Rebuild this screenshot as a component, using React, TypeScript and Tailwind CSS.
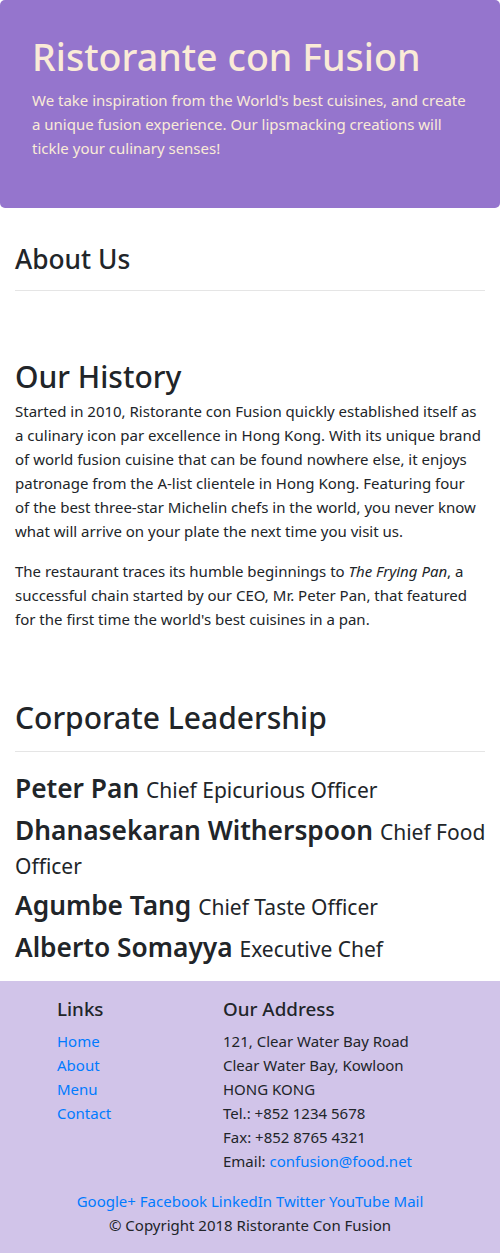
const Lines = ({ lines }: { lines: React.ReactNode[] }) => (
	<>
		{lines.map((l, i) => (
			<span key={i} className="block whitespace-nowrap">
				{l}
			</span>
		))}
	</>
);

export default function App() {
	const leaders: { name: string; title: React.ReactNode }[] = [
		{ name: "Peter Pan", title: "Chief Epicurious Officer" },
		{
			name: "Dhanasekaran Witherspoon",
			title: (
				<>
					Chief Food
					<br />
					Officer
				</>
			),
		},
		{ name: "Agumbe Tang", title: "Chief Taste Officer" },
		{ name: "Alberto Somayya", title: "Executive Chef" },
	];

	return (
		<div className="min-h-screen bg-white text-[#212529] font-['Noto_Sans',sans-serif] text-[15px] leading-6">
			<header className="mb-8 rounded-[5px] bg-[#9575cd] px-8 py-8 text-[#faebd7]">
				<h1 className="mb-2 pt-[1px] text-[37.6px] leading-[47px] font-medium">Ristorante con Fusion</h1>
				<p className="mb-4">
					<Lines
						lines={[
							"We take inspiration from the World's best cuisines, and create",
							"a unique fusion experience. Our lipsmacking creations will",
							"tickle your culinary senses!",
						]}
					/>
				</p>
			</header>

			<main className="px-[15px]">
				<h3 className="pt-[3px] text-[26.3px] leading-[33.6px] font-medium">About Us</h3>
				<hr className="mt-[13px] border-[#e5e5e5]" />

				<h2 className="mt-16 mb-[3px] pt-[3px] text-[30px] leading-[38.4px] font-medium">Our History</h2>
				<p className="mb-4">
					<Lines
						lines={[
							"Started in 2010, Ristorante con Fusion quickly established itself as",
							"a culinary icon par excellence in Hong Kong. With its unique brand",
							"of world fusion cuisine that can be found nowhere else, it enjoys",
							"patronage from the A-list clientele in Hong Kong. Featuring four",
							"of the best three-star Michelin chefs in the world, you never know",
							"what will arrive on your plate the next time you visit us.",
						]}
					/>
				</p>
				<p>
					<Lines
						lines={[
							<>
								The restaurant traces its humble beginnings to <em>The Frying Pan</em>, a
							</>,
							"successful chain started by our CEO, Mr. Peter Pan, that featured",
							"for the first time the world's best cuisines in a pan.",
						]}
					/>
				</p>

				<h2 className="mt-[65px] pt-[3px] text-[30px] leading-[38.4px] font-medium">Corporate Leadership</h2>
				<hr className="mt-[14px] border-[#e5e5e5]" />
				<div className="mt-[20px]">
					{leaders.map((l) => (
						<h3 key={l.name} className="mb-2 whitespace-nowrap text-[26.3px] leading-[33.6px] font-semibold">
							{l.name} <small className="text-[21px] leading-none font-normal">{l.title}</small>
						</h3>
					))}
				</div>
			</main>

			<footer className="mt-[17px] bg-[#d1c4e9] pt-4 pb-4">
				<div className="flex pl-[57px]">
					<div className="w-[166px]">
						<h5 className="mb-2 text-[18.8px] leading-6 font-medium">Links</h5>
						<ul className="text-[#007bff]">
							<li>Home</li>
							<li>About</li>
							<li>Menu</li>
							<li>Contact</li>
						</ul>
					</div>
					<div>
						<h5 className="mb-2 text-[18.8px] leading-6 font-medium">Our Address</h5>
						<address className="mb-4 not-italic">
							121, Clear Water Bay Road
							<br />
							Clear Water Bay, Kowloon
							<br />
							HONG KONG
							<br />
							Tel.: +852 1234 5678
							<br />
							Fax: +852 8765 4321
							<br />
							Email: <a className="text-[#007bff]">confusion@food.net</a>
						</address>
					</div>
				</div>
				<div className="text-center text-[#007bff]">Google+ Facebook LinkedIn Twitter YouTube Mail</div>
				<p className="text-center">© Copyright 2018 Ristorante Con Fusion</p>
			</footer>
		</div>
	);
}
